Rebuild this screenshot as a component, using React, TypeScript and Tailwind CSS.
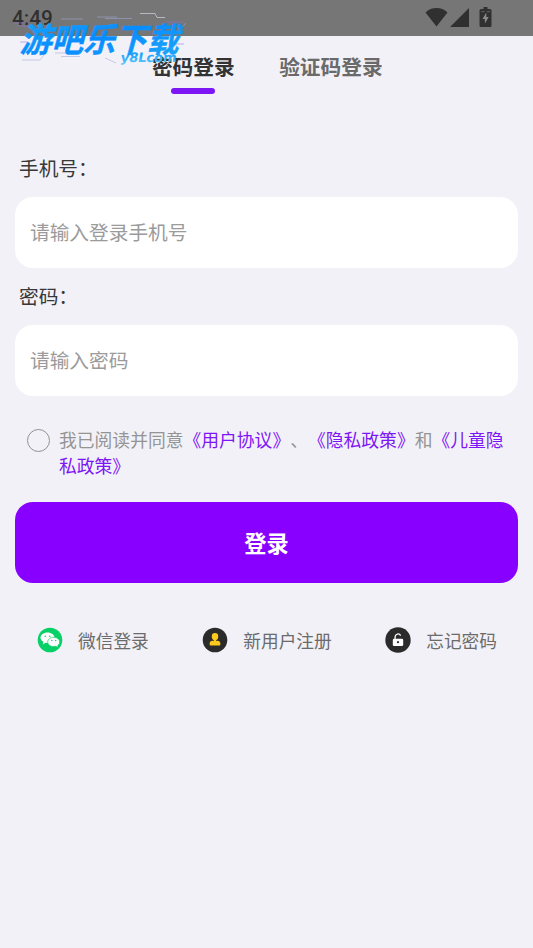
import type { ReactNode } from 'react'

function StatusBar() {
  return (
    <header className="flex h-[35.5px] items-start justify-between bg-[#767676] pl-3 pr-[40.5px] text-[#303030]">
      <span className="mt-[6px] font-['Roboto',sans-serif] text-[20.8px] leading-6 font-medium">4:49</span>
      <div className="mt-[7px] flex items-start">
        <svg width="23" height="20" viewBox="0 0 23 20" fill="currentColor">
          <path d="M0.5 5.5C6.5-0.4 16.5-0.4 22.5 5.5L11.5 19.5Z" />
        </svg>
        <svg className="ml-[1.5px]" width="20" height="20" viewBox="0 0 20 20" fill="currentColor">
          <path d="M19 1V20H0Z" />
        </svg>
        <svg className="ml-[9px]" width="14" height="20" viewBox="0 0 14 20">
          <path fill="currentColor" d="M4.5 0h4v2h2.5q1.5 0 1.5 1.5v15q0 1.5-1.5 1.5H2q-1.5 0-1.5-1.5v-15Q.5 2 2 2h2.5Z" />
          <path fill="#8a8a8a" d="M7.3 5.5v4.5h2.4L5.9 16.5V12H3.5Z" />
          <path stroke="#656565" strokeWidth="1" d="M2.5 4.7h3M8 4.7h3" />
        </svg>
      </div>
    </header>
  )
}

function SiteLogo() {
  return (
    <svg className="absolute top-0 left-0" width="200" height="75" viewBox="0 0 200 75">
      <defs>
        <linearGradient id="logo" x1="0" y1="0" x2="1" y2="1">
          <stop offset="0" stopColor="#19a8fb" />
          <stop offset="0.5" stopColor="#078cff" />
          <stop offset="1" stopColor="#20a9f8" />
        </linearGradient>
        <linearGradient id="logo-url" x1="0" y1="0" x2="0" y2="1">
          <stop offset="0.3" stopColor="#1ea2fb" />
          <stop offset="1" stopColor="#5cc9f8" />
        </linearGradient>
      </defs>
      <g fill="none" strokeWidth="0.7">
        <path stroke="#d4d6ea" d="M140 13.5h15l2 4h8" />
        <path stroke="#8874df" strokeOpacity="0.8" d="M14 23h12M17 26h10M20 42h7M166 22h18M172 44h12" />
        <path stroke="#a1a9dc" strokeOpacity="0.8" d="M61 19h22M97 17h20M105 18.5h27M22 60h18l7-9M55 53h10M61 56.5h19M105 58l11 5M178 32l8-9" />
      </g>
      <text
        transform="translate(19.5 51.5) skewX(-15)"
        textLength="159"
        lengthAdjust="spacingAndGlyphs"
        className="font-['Noto_Sans_CJK_SC',sans-serif] text-[33.5px] font-bold"
        fill="url(#logo)"
        stroke="url(#logo)"
        strokeWidth="0.4"
      >
        游吧乐下载
      </text>
      <text
        transform="translate(120 61.5) skewX(-10)"
        textLength="56"
        lengthAdjust="spacingAndGlyphs"
        className="font-['DejaVu_Sans',sans-serif] text-[13px] font-bold"
        fill="url(#logo-url)"
      >
        y8Lcom
      </text>
    </svg>
  )
}

function Field({ label, placeholder, type }: { label: string; placeholder: string; type: string }) {
  return (
    <label className="block">
      <span className="block pl-1 text-[19.7px] leading-[29px] text-[#383838]">{label}</span>
      <input
        type={type}
        placeholder={placeholder}
        className="mt-[15px] block h-[71px] w-full rounded-[18px] bg-white px-[15px] pb-[2px] text-[19.7px] outline-none placeholder:text-[#9b9b9b]"
      />
    </label>
  )
}

function Policy({ children }: { children: ReactNode }) {
  return <a className="text-[#7d16f5]">{children}</a>
}

function WechatIcon() {
  return (
    <svg width="26" height="26" viewBox="0 0 26 26">
      <circle cx="13" cy="13" r="12.3" fill="#07d066" />
      <path fill="#fff" d="M10.5 5.5c4 0 7 2.4 7 5.3s-3 5.3-7 5.3l-2-.3-2.8 1.6.7-2.6C4.6 13.8 3.5 12.5 3.5 10.8c0-2.9 3-5.3 7-5.3Z" />
      <path fill="#fff" stroke="#07d066" strokeWidth=".7" d="M16.7 10.3c3.4 0 6 2.1 6 4.7 0 1.5-.8 2.6-2 3.5l.5 2-2.4-1.2-2.1.3c-3.4 0-6-2-6-4.6s2.6-4.7 6-4.7Z" />
      <g fill="#07d066">
        <circle cx="8.2" cy="9.3" r=".8" /><circle cx="12.8" cy="9.3" r=".8" />
        <circle cx="14.8" cy="13.5" r=".7" /><circle cx="18.7" cy="13.5" r=".7" />
      </g>
    </svg>
  )
}

function UserIcon() {
  return (
    <svg width="26" height="26" viewBox="0 0 26 26">
      <circle cx="13" cy="13" r="12.3" fill="#2b2b2b" />
      <rect x="9.8" y="6" width="6.4" height="7.2" rx="3.1" fill="#fccb1d" />
      <path fill="#fccb1d" d="M12 12.5h2v1.3h1.5c1.8 0 2.8 1.1 2.8 2.7v1c0 .7-.4 1.1-1.1 1.1H8.8c-.7 0-1.1-.4-1.1-1.1v-1c0-1.6 1-2.7 2.8-2.7H12Z" />
    </svg>
  )
}

function LockIcon() {
  return (
    <svg width="26" height="26" viewBox="0 0 26 26">
      <circle cx="13" cy="13" r="12.7" fill="#2b2b2b" />
      <path fill="none" stroke="#fff" strokeWidth="1.3" d="M10.1 12V9.8a2.9 2.9 0 0 1 5.5-1.2" />
      <rect x="7.8" y="11.8" width="10.4" height="7.2" rx="1.3" fill="#fff" />
      <circle cx="13" cy="15.2" r="1.1" fill="#2b2b2b" />
    </svg>
  )
}

function Shortcut({ icon, children }: { icon: ReactNode; children: ReactNode }) {
  return (
    <a className="flex items-center gap-[15px] text-[17.7px] leading-[26px] text-[#6b6b6b]">
      {icon}
      <span>{children}</span>
    </a>
  )
}

export default function App() {
  return (
    <div className="relative h-[948px] w-[533px] overflow-hidden bg-[#f2f1f7] font-['Noto_Sans_CJK_SC',sans-serif]">
      <StatusBar />
      <nav className="flex justify-center gap-[44.5px] pt-[15px] pl-[1.5px] text-[20.7px] leading-[30px] font-bold">
        <div className="flex flex-col items-center text-[#333]">
          密码登录
          <span className="mt-[7px] mr-px h-[6px] w-[44px] rounded-full bg-[#7d16f5]" />
        </div>
        <div className="text-[#6a6a6a]">验证码登录</div>
      </nav>
      <main className="px-[15px] pt-[59px]">
        <Field label="手机号：" placeholder="请输入登录手机号" type="tel" />
        <div className="h-[13px]" />
        <Field label="密码：" placeholder="请输入密码" type="password" />
        <div className="mt-[30px] flex pr-[10px] pl-[11.5px]">
          <span className="mt-[3px] size-[23px] shrink-0 rounded-full border border-[#929292]" />
          <p className="ml-[9.5px] text-[17.8px] leading-[26.7px] text-[#949494] [text-spacing-trim:space-all]">
            我已阅读并同意<Policy>《用户协议》</Policy>、<Policy>《隐私政策》</Policy>和<Policy>《儿童隐私政策》</Policy>
          </p>
        </div>
        <button className="mt-[23px] block h-[81px] w-full rounded-[18px] bg-[#8800ff] text-[22.2px] font-bold text-white">
          登录
        </button>
        <div className="mt-[44px] flex justify-between pr-[21px] pl-[22px]">
          <Shortcut icon={<WechatIcon />}>微信登录</Shortcut>
          <Shortcut icon={<UserIcon />}>新用户注册</Shortcut>
          <Shortcut icon={<LockIcon />}>忘记密码</Shortcut>
        </div>
      </main>
      <SiteLogo />
    </div>
  )
}
